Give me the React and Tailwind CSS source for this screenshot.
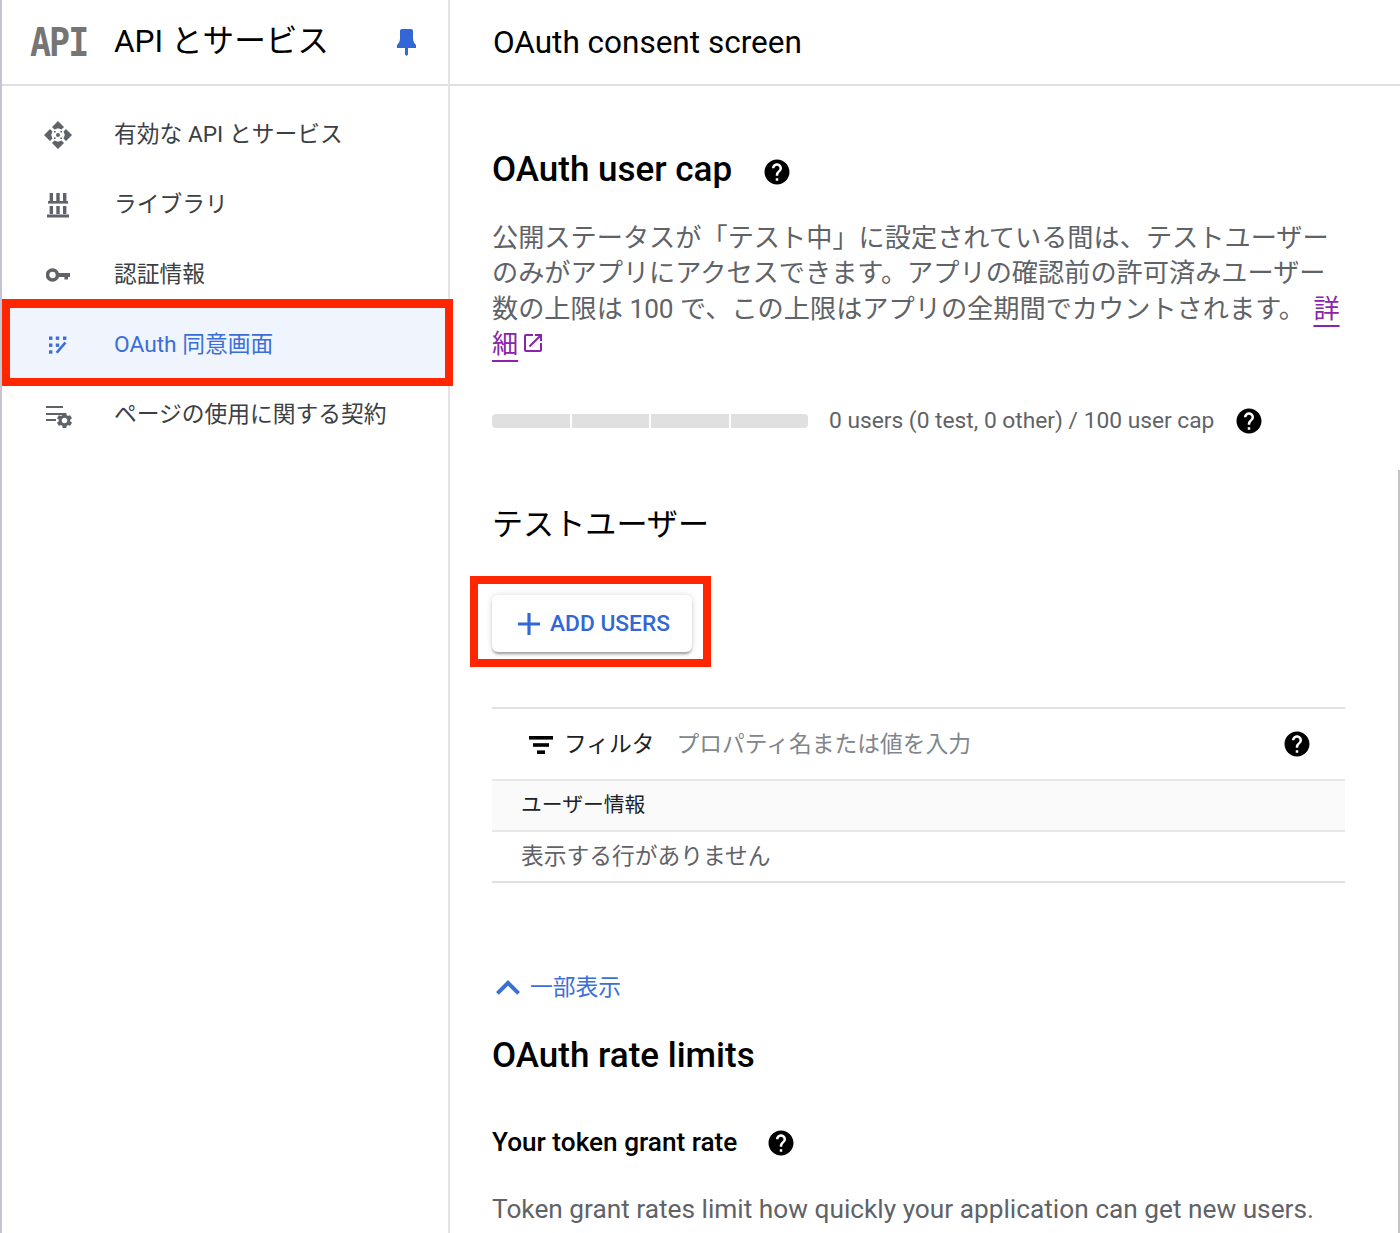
import React from 'react';
import { MdAdd, MdExpandLess, MdHelp, MdOpenInNew, MdSettings } from 'react-icons/md';

const EnabledApisIcon = ({ className }) => (
  <svg viewBox="0 0 28 28" className={className} fill="currentColor">
    {[0, 90, 180, 270].map((angle) => (
      <polygon key={angle} points="14,0 20,6 17.5,8.5 14,7.2 10.5,8.5 8,6" transform={`rotate(${angle} 14 14)`} />
    ))}
    <circle cx="14" cy="14" r="2" />
    <rect x="10" y="10" width="1.6" height="1.6" />
    <rect x="16.4" y="10" width="1.6" height="1.6" />
    <rect x="10" y="16.4" width="1.6" height="1.6" />
    <rect x="16.4" y="16.4" width="1.6" height="1.6" />
  </svg>
);

const LibraryIcon = ({ className }) => (
  <svg viewBox="0 0 22 25" className={className} fill="currentColor">
    <rect x="2.6" y="0" width="3.4" height="8" />
    <rect x="9.3" y="0" width="3.4" height="8" />
    <rect x="16" y="0" width="3.4" height="8" />
    <rect x="1" y="8" width="20" height="2.6" />
    <rect x="2.6" y="13" width="3.4" height="8" />
    <rect x="9.3" y="13" width="3.4" height="8" />
    <rect x="16" y="13" width="3.4" height="8" />
    <rect x="0" y="21.5" width="22" height="3" />
  </svg>
);

const KeyIcon = ({ className }) => (
  <svg viewBox="0 0 24 14" className={className} fill="currentColor">
    <circle cx="6.5" cy="7" r="5" fill="none" stroke="currentColor" strokeWidth="3.6" />
    <path d="M11 5h13v4h-2v2.4h-3.6V9H11z" />
  </svg>
);

const ConsentIcon = ({ className }) => (
  <svg viewBox="0 0 20 18" className={className} fill="currentColor">
    <rect x="1" y="0.5" width="3.4" height="3.4" />
    <rect x="7.8" y="0.5" width="3.4" height="3.4" />
    <rect x="15" y="0.5" width="3.4" height="3.4" />
    <rect x="1" y="7.5" width="3.4" height="3.4" />
    <rect x="7.8" y="7.5" width="3.4" height="3.4" />
    <rect x="1" y="14.3" width="3.4" height="3.4" />
    <path d="M18.5 7.2 9.8 17.6 7.6 16 16.4 5.8z" />
  </svg>
);

const UsageIcon = ({ className }) => (
  <div className={`relative ${className}`}>
    <div className="ml-[2px] mt-[3px] flex flex-col gap-[4.5px]">
      <div className="h-[2px] w-[17px] bg-current" />
      <div className="h-[2px] w-[17px] bg-current" />
      <div className="h-[2px] w-[10px] bg-current" />
    </div>
    <MdSettings className="absolute left-[11px] top-[8px] text-[19px]" />
  </div>
);

const PinIcon = ({ className }) => (
  <svg viewBox="0 0 19 27" className={className} fill="currentColor">
    <path d="M5 0h9c1.2 0 2 .8 2 2v7c0 3 1 5 3 7v3H11v6.5L9.5 27 8 25.5V19H0v-3c2-2 3-4 3-7V2c0-1.2.8-2 2-2z" />
  </svg>
);

const FilterIcon = ({ className }) => (
  <svg viewBox="0 0 24 18" className={className} fill="currentColor">
    <rect x="0" y="0" width="24" height="3.6" />
    <rect x="4" y="7.2" width="16" height="3.6" />
    <rect x="8" y="14.4" width="8" height="3.6" />
  </svg>
);

const NAV_ITEMS = [
  { label: '有効な API とサービス', icon: <EnabledApisIcon className="h-[28px] w-[28px]" /> },
  { label: 'ライブラリ', icon: <LibraryIcon className="h-[25px] w-[22px]" /> },
  { label: '認証情報', icon: <KeyIcon className="h-[14px] w-[24px]" /> },
  { label: 'OAuth 同意画面', icon: <ConsentIcon className="h-[18px] w-[20px]" />, active: true },
  { label: 'ページの使用に関する契約', icon: <UsageIcon className="h-[24px] w-[28px]" /> },
];

const HelpIcon = () => <MdHelp className="shrink-0 text-[30px] text-black" />;

const App = () => {
  return (
    <div
      className="relative flex h-[1233px] w-[1400px] overflow-hidden bg-white text-black"
      style={{ fontFamily: 'Roboto, "Noto Sans CJK JP", sans-serif' }}
    >
      {/* Left nav */}
      <aside className="relative w-[450px] shrink-0 border-l-2 border-r-2 border-l-[#c6c4d2] border-r-[#e3e3e3]">
        <div className="flex h-[86px] items-center border-b-2 border-[#e0e0e0]">
          <span
            className="ml-[28px] mt-[2px] w-[84px] scale-y-110 text-[35px] font-bold leading-none tracking-[-2px] text-[#757575]"
            style={{ fontFamily: '"DejaVu Sans Mono", monospace' }}
          >
            API
          </span>
          <span className="text-[31.6px] leading-none">API とサービス</span>
          <PinIcon className="ml-auto mr-[32px] h-[27px] w-[19px] text-[#3367d6]" />
        </div>
        <nav className="pt-[14px]">
          {NAV_ITEMS.map((item) => (
            <div
              key={item.label}
              className={`relative flex h-[70px] items-center ${item.active ? 'text-[#3b6fd8]' : 'text-[#3c4043]'}`}
            >
              {item.active && (
                <div className="absolute -bottom-[6px] -right-[5px] -top-[11px] left-0 border-[8px] border-t-[9px] border-[#ff2600] bg-[#f0f4fd]" />
              )}
              <div className={`relative flex w-[112px] justify-center ${item.active ? '' : 'text-[#5f6368]'}`}>{item.icon}</div>
              <span className="relative text-[22.75px] leading-none">{item.label}</span>
            </div>
          ))}
        </nav>
      </aside>

      {/* Main */}
      <main className="min-w-0 flex-1">
        <div className="flex h-[86px] items-center border-b-2 border-[#e0e0e0] pl-[43px] pt-[2px]">
          <h1 className="text-[31.5px] font-normal leading-none">OAuth consent screen</h1>
        </div>
        <div className="w-[895px] pl-[42px]">
          <div className="mt-[61px] flex h-[50px] items-center gap-[30px]">
            <h2 className="mb-[6px] text-[35px] font-medium leading-none">OAuth user cap</h2>
            <HelpIcon />
          </div>
          <p className="mt-[24px] text-[26.2px] leading-[35.3px] text-[#5f6368]">
            公開ステータスが「テスト中」に設定されている間は、テストユーザーのみがアプリにアクセスできます。アプリの確認前の許可済みユーザー数の上限は 100 で、この上限はアプリの全期間でカウントされます。{' '}
            <a className="ml-[2px] text-[#8924ab] underline decoration-2 underline-offset-[7px]">
              詳細
            </a>
            <MdOpenInNew className="ml-[3px] inline-block align-[-2px] text-[24px] text-[#8924ab]" />
          </p>
          <div className="mt-[44px] flex h-[30px] items-center">
            <div className="flex h-[14px] w-[316px] gap-[2px] overflow-hidden rounded-[4px]">
              <div className="flex-1 bg-[#e0e0e0]" />
              <div className="flex-1 bg-[#e0e0e0]" />
              <div className="flex-1 bg-[#e0e0e0]" />
              <div className="flex-1 bg-[#e0e0e0]" />
            </div>
            <span className="ml-[21px] text-[22.75px] leading-none text-[#5f6368]">0 users (0 test, 0 other) / 100 user cap</span>
            <div className="ml-[20px] flex"><HelpIcon /></div>
          </div>
          <h3 className="mt-[67px] text-[31.1px] font-normal leading-[44px]">テストユーザー</h3>

          <div className="relative mt-[48px] h-[57px] w-[200px]">
            <div className="absolute -bottom-[15px] -left-[22px] -right-[19px] -top-[19px] border-[8px] border-[#ff2600]" />
            <button className="relative flex h-full w-full items-center gap-[2px] rounded-[6px] bg-white pl-[18px] text-[22.75px] font-medium text-[#3367d6] shadow-[0_3px_3px_-1px_rgba(0,0,0,0.35),0_0_6px_rgba(0,0,0,0.15)]">
              <MdAdd className="text-[38px]" />
              ADD USERS
            </button>
          </div>

          {/* Test users table */}
          <div className="mt-[55px] w-[853px] border-t-2 border-[#e0e0e0]">
            <div className="flex h-[70px] items-center pl-[37px] pr-[33px] pt-[2px]">
              <FilterIcon className="h-[18px] w-[24px]" />
              <span className="ml-[11px] text-[22.75px] text-[#202124]">フィルタ</span>
              <span className="ml-[22px] text-[22.75px] text-[#80868b]">プロパティ名または値を入力</span>
              <div className="-mt-[2px] ml-auto flex"><HelpIcon /></div>
            </div>
            <div className="flex h-[53px] items-center border-y-2 border-[#e8e8e8] bg-[#fafafa] pl-[29px] text-[20.8px] text-[#202124]">
              ユーザー情報
            </div>
            <div className="flex h-[51px] items-center border-b-2 border-[#e0e0e0] pl-[29px] text-[22.75px] text-[#5f6368]">
              表示する行がありません
            </div>
          </div>

          <div className="mt-[85px] flex h-[40px] items-center text-[#3b6fd8]">
            <MdExpandLess className="-ml-[8px] text-[48px]" />
            <span className="-ml-[2px] text-[22.75px]">一部表示</span>
          </div>
          <h2 className="mt-[28px] text-[35px] font-medium leading-[40px]">OAuth rate limits</h2>
          <div className="mt-[47px] flex h-[40px] items-center gap-[29px]">
            <h3 className="mb-[2px] text-[26.2px] font-medium leading-none">Your token grant rate</h3>
            <HelpIcon />
          </div>
          <p className="mt-[29px] whitespace-nowrap text-[26.25px] leading-[35px] text-[#5f6368]">
            Token grant rates limit how quickly your application can get new users.
          </p>
        </div>
      </main>

      {/* Scrollbar thumb */}
      <div className="absolute bottom-0 right-0 top-[470px] w-[2px] bg-[#c4c4c4]" />
    </div>
  );
};

export default App;
